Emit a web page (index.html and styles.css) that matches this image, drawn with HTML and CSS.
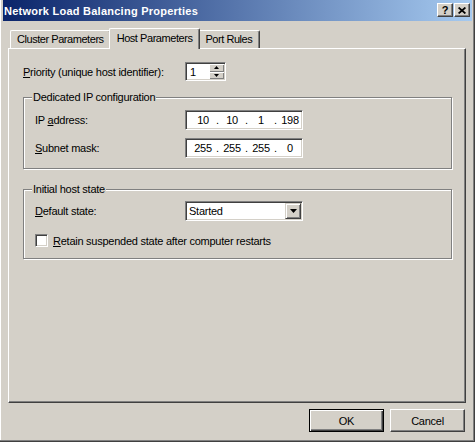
FILE: index.html
```html
<!DOCTYPE html>
<html lang="en">
<head>
<meta charset="utf-8">
<title>Network Load Balancing Properties</title>
<link rel="stylesheet" href="styles.css">
</head>
<body>
<div class="window">
  <div class="titlebar">
    <span class="title">Network Load Balancing Properties</span>
    <div class="caption-buttons">
      <span class="cbtn help">?</span>
      <span class="cbtn close"><svg width="8" height="7" viewBox="0 0 8 7"><path d="M0.6 0.5 L7.4 6.5 M7.4 0.5 L0.6 6.5" stroke="#000" stroke-width="1.7" fill="none"/></svg></span>
    </div>
  </div>
  <div class="client">
    <div class="tabs">
      <div class="tab">Cluster Parameters</div>
      <div class="tab selected">Host Parameters</div>
      <div class="tab last">Port Rules</div>
    </div>
    <div class="panel">
      <div class="row priority">
        <label><u>P</u>riority (unique host identifier):</label>
        <div class="spinner sunken">
          <span class="spin-value">1</span>
          <div class="spin-buttons">
            <span class="spin-btn"><svg width="5" height="3" viewBox="0 0 5 3"><path d="M2.5 0 L5 3 H0z" fill="#000"/></svg></span>
            <span class="spin-btn"><svg width="5" height="3" viewBox="0 0 5 3"><path d="M0 0 H5 L2.5 3z" fill="#000"/></svg></span>
          </div>
        </div>
      </div>

      <fieldset class="group ip-group">
        <legend>Dedicated IP configuration</legend>
        <div class="group-body">
          <div class="row">
            <label>IP <u>a</u>ddress:</label>
            <div class="ipbox sunken">
              <span class="oct">10</span><span class="dot">.</span><span class="oct">10</span><span class="dot">.</span><span class="oct">1</span><span class="dot">.</span><span class="oct">198</span>
            </div>
          </div>
          <div class="row">
            <label><u>S</u>ubnet mask:</label>
            <div class="ipbox sunken">
              <span class="oct">255</span><span class="dot">.</span><span class="oct">255</span><span class="dot">.</span><span class="oct">255</span><span class="dot">.</span><span class="oct">0</span>
            </div>
          </div>
        </div>
      </fieldset>

      <fieldset class="group state-group">
        <legend>Initial host state</legend>
        <div class="group-body">
          <div class="row">
            <label><u>D</u>efault state:</label>
            <div class="combo sunken">
              <span class="combo-value">Started</span>
              <span class="combo-btn"><svg width="7" height="4" viewBox="0 0 7 4"><path d="M0 0 H7 L3.5 4z" fill="#000"/></svg></span>
            </div>
          </div>
          <div class="check-row">
            <span class="checkbox sunken"></span>
            <span class="check-label"><u>R</u>etain suspended state after computer restarts</span>
          </div>
        </div>
      </fieldset>
    </div>
    <div class="buttons">
      <button class="btn default">OK</button>
      <button class="btn">Cancel</button>
    </div>
  </div>
</div>
</body>
</html>
```

FILE: styles.css
```css
* { box-sizing: border-box; }
html, body { margin: 0; padding: 0; }
body {
  width: 475px;
  height: 442px;
  overflow: hidden;
  background: #D4D0C8;
  font-family: "Liberation Sans", Arial, sans-serif;
  font-size: 11px;
  letter-spacing: -0.25px;
  color: #000;
}
u { text-decoration: underline; text-underline-offset: 1px; }

.window {
  width: 475px;
  height: 442px;
  display: flex;
  flex-direction: column;
  padding: 0 3px 3px 3px;
  background: #D4D0C8;
  box-shadow: inset -1px -1px 0 #404040, inset -2px -2px 0 #808080, inset 1px 0 0 #fff;
}

.titlebar {
  height: 21px;
  flex: none;
  display: flex;
  align-items: flex-start;
  justify-content: space-between;
  padding: 3px 2px 0 1px;
  background: linear-gradient(to right, #0A246A, #A6CAF0);
}
.title {
  color: #fff;
  font-weight: bold;
  letter-spacing: 0.25px;
  line-height: 16px;
}
.caption-buttons { display: flex; gap: 1px; }
.cbtn {
  width: 16px;
  height: 14px;
  background: #D4D0C8;
  border: 1px solid;
  border-color: #fff #404040 #404040 #fff;
  box-shadow: inset -1px -1px 0 #808080;
  display: flex;
  align-items: center;
  justify-content: center;
}
.help {
  font-weight: bold;
  font-size: 11px;
  line-height: 12px;
  letter-spacing: 0;
}

.client {
  flex: 1;
  display: flex;
  flex-direction: column;
  padding: 7px 6px 7px 5px;
}

.tabs {
  display: flex;
  align-items: flex-end;
  height: 20px;
  flex: none;
  padding-left: 2px;
  position: relative;
  z-index: 1;
}
.tab {
  height: 18px;
  line-height: 17px;
  padding: 0 6px;
  letter-spacing: -0.45px;
  border-top: 1px solid #fff;
  border-left: 1px solid #fff;
  border-right: 1px solid #404040;
  border-radius: 2px 2px 0 0;
  box-shadow: inset -1px 0 0 #808080;
  white-space: nowrap;
  background: #D4D0C8;
}
.tab.selected {
  height: 21px;
  margin: 0 -2px -1px -2px;
  padding: 0 7px 0 7px;
  line-height: 18px;
  position: relative;
}
.tab.last { padding: 0 7px 0 6px; }

.panel {
  flex: 1;
  border-top: 1px solid #fff;
  border-left: 1px solid #fff;
  border-right: 1px solid #404040;
  border-bottom: 1px solid #404040;
  box-shadow: inset -1px -1px 0 #808080;
  padding: 13px 13px 0 14px;
}

.row { display: flex; align-items: center; }
.row label { flex: none; }
.priority label { width: 162px; }
.group .row label { width: 150px; }

.sunken {
  border: 1px solid;
  border-color: #808080 #fff #fff #808080;
  box-shadow: inset 1px 1px 0 #404040, inset -1px -1px 0 #D4D0C8;
}

.spinner {
  width: 41px;
  height: 19px;
  display: flex;
  background: #fff;
  padding: 1px;
}
.spin-value { flex: 1; padding-left: 3px; line-height: 16px; }
.spin-buttons {
  width: 15px;
  display: flex;
  flex-direction: column;
}
.spin-btn {
  flex: 1;
  background: #D4D0C8;
  box-shadow: inset 1px 1px 0 #fff, inset -1px -1px 0 #808080;
  display: flex;
  align-items: center;
  justify-content: center;
}

.group {
  margin: 10px 0 0 0;
  padding: 0;
  min-width: 0;
  border: 1px solid #808080;
  box-shadow: inset 1px 1px 0 #fff, 1px 1px 0 #fff;
}
.group legend {
  margin-left: 8px;
  padding: 0 1px;
  line-height: 13px;
  background: #D4D0C8;
}
.group-body {
  display: flex;
  flex-direction: column;
}
.ip-group .group-body { padding: 6px 0 10px 11px; gap: 8px; }
.state-group { margin-top: 14px; }
.state-group .group-body { padding: 5px 0 11px 11px; gap: 13px; }

.ipbox {
  width: 118px;
  height: 20px;
  display: flex;
  align-items: center;
  padding-left: 5px;
  background: #fff;
}
.oct { width: 24px; text-align: center; }
.dot { width: 5px; text-align: center; }

.combo {
  width: 118px;
  height: 20px;
  display: flex;
  align-items: center;
  padding: 1px 1px 1px 3px;
  background: #fff;
}
.combo-value { flex: 1; }
.combo-btn {
  width: 16px;
  height: 16px;
  background: #D4D0C8;
  border: 1px solid;
  border-color: #D4D0C8 #404040 #404040 #D4D0C8;
  box-shadow: inset 1px 1px 0 #fff, inset -1px -1px 0 #808080;
  display: flex;
  align-items: center;
  justify-content: center;
}

.check-row { display: flex; align-items: center; height: 13px; }
.checkbox {
  width: 13px;
  height: 13px;
  background: #fff;
  flex: none;
}
.check-label { margin-left: 5px; }

.buttons {
  display: flex;
  justify-content: flex-end;
  gap: 6px;
  margin-top: 6px;
  padding-right: 1px;
  flex: none;
}
.btn {
  width: 75px;
  height: 23px;
  font: inherit;
  letter-spacing: inherit;
  color: #000;
  background: #D4D0C8;
  border: 1px solid;
  border-color: #fff #404040 #404040 #fff;
  box-shadow: inset -1px -1px 0 #808080;
  padding: 0;
}
.btn.default {
  border-color: #000;
  box-shadow: inset 1px 1px 0 #fff, inset -1px -1px 0 #404040, inset -2px -2px 0 #808080;
}
```
